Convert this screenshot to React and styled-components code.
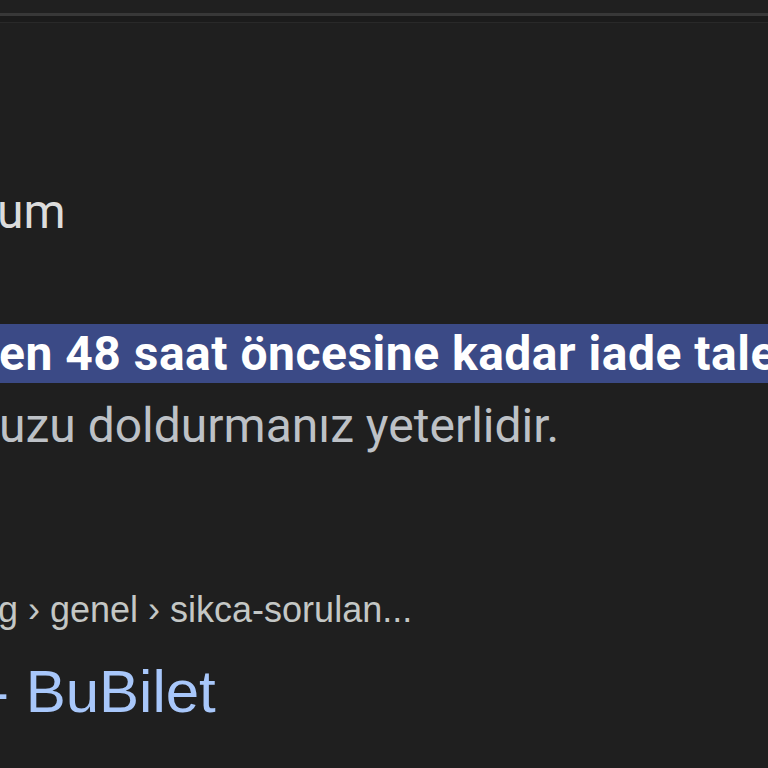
import React from "react";
import styled, { createGlobalStyle } from "styled-components";

const GlobalStyle = createGlobalStyle`
    html, body {
        margin: 0;
        padding: 0;
        background: #1f1f1f;
        overflow: hidden;
    }
`;

const Page = styled.div`
    width: 768px;
    height: 768px;
    overflow: hidden;
    background: #1f1f1f;
    display: flex;
    flex-direction: column;
`;

const TopBar = styled.div`
    height: 13px;
    border-bottom: 3px solid #383838;
    background: #202020;
`;

const TopShade = styled.div`
    height: 6px;
    background: #1b1b1b;
    border-bottom: 1px solid #292929;
`;

const Content = styled.div`
    display: flex;
    flex-direction: column;
    white-space: nowrap;
`;

const Ghost = styled.div`
    margin-top: 46px;
    margin-left: -14px;
    height: 24px;
    font-family: "Roboto", "Liberation Sans", sans-serif;
    font-size: 22px;
    line-height: 24px;
    color: #3a3a3a;
`;

const TextLine = styled.div`
    font-family: "Roboto", "Liberation Sans", sans-serif;
    font-size: 48px;
    line-height: 72px;
    height: 72px;
    color: ${p => p.$bright ? "#dcdcdc" : "#bdc1c6"};
    margin-left: ${p => p.$shift || 0}px;
    margin-top: ${p => p.$top || 0}px;
`;

const Mark = styled.span`
    background: #3b4a86;
    color: #ffffff;
    font-weight: 700;
    letter-spacing: 0.5px;
    padding: 1px 20px 1px 0;
`;

const Crumbs = styled.div`
    margin-top: 126px;
    margin-left: -2px;
    height: 44px;
    font-family: "Liberation Sans", Arial, sans-serif;
    font-size: 36px;
    line-height: 44px;
    color: #c4c7c5;
`;

const Title = styled.div`
    margin-top: 24px;
    margin-left: -11px;
    height: 72px;
    font-family: "Liberation Sans", Arial, sans-serif;
    font-size: 60px;
    line-height: 72px;
    color: #a8c7fa;
`;

export default function App() {
    return (
        <Page>
            <GlobalStyle />
            <TopBar />
            <TopShade />
            <Content>
                <Ghost>k</Ghost>
                <TextLine $bright $top={83} $shift={-3}>um</TextLine>
                <TextLine $top={70} $shift={-1}>
                    <Mark>en 48 saat öncesine kadar iade talep formunu</Mark>
                </TextLine>
                <TextLine $shift={-1}>uzu doldurmanız yeterlidir.</TextLine>
                <Crumbs>g › genel › sikca-sorulan...</Crumbs>
                <Title>- BuBilet</Title>
            </Content>
        </Page>
    );
}
